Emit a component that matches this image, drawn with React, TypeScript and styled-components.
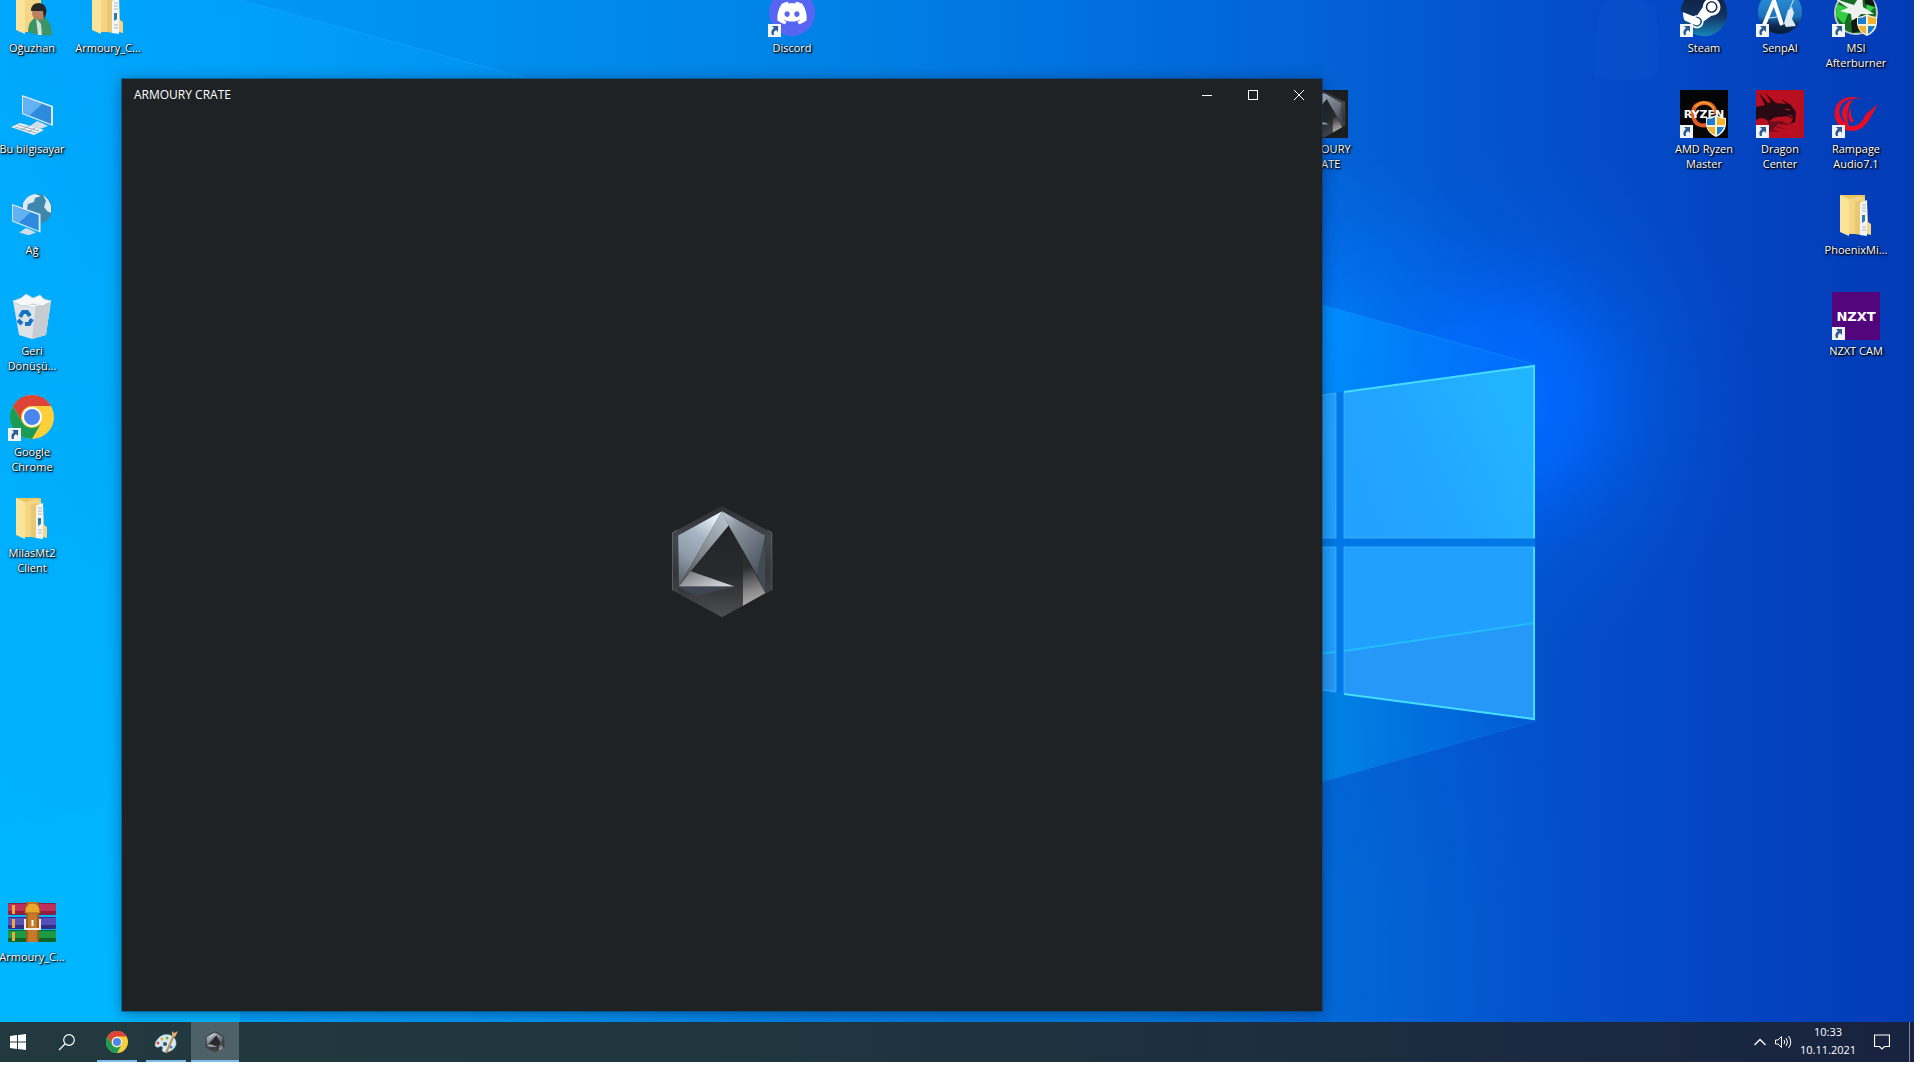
import React from "react";
import styled, { createGlobalStyle } from "styled-components";
import { FaDiscord, FaSteam } from "react-icons/fa";

const GlobalStyle = createGlobalStyle`
  * { box-sizing: border-box; }
  body { margin: 0; background: #fff; }
  button { border: 0; padding: 0; background: none; color: inherit; font: inherit; cursor: default; }
`;

const Screen = styled.main`
  min-height: 100vh;
  padding: 0 6px 18px 0;
  display: flex;
  flex-direction: column;
  overflow: hidden;
  font-family: "Open Sans", "Noto Sans", sans-serif;
  font-size: 11px;
  line-height: 15px;
  color: #fff;
`;

const Desktop = styled.section`
  flex: 1;
  position: relative;
  overflow: hidden;
  background: #0078e0;
`;

const WallpaperSvg = styled.svg`
  position: absolute;
  inset: 0;
  width: 100%;
  height: 100%;
`;

const IconGrid = styled.ul`
  position: relative;
  list-style: none;
  margin: -11px 0 0 -6px;
  padding: 0;
  display: grid;
  grid-template-columns: repeat(25, 76px);
  grid-auto-rows: 101px;
`;

const IconCell = styled.li<{ $col: number; $row: number }>`
  grid-column: ${(p) => p.$col};
  grid-row: ${(p) => p.$row};
  display: flex;
  justify-content: center;
`;

const IconButton = styled.button`
  display: flex;
  flex-direction: column;
  align-items: center;
  gap: 3px;
`;

const IconImage = styled.span`
  position: relative;
  display: block;
  width: 48px;
  height: 48px;
  & > svg { display: block; }
`;

const ShortcutBadge = styled.svg`
  position: absolute;
  left: 0;
  bottom: 0;
`;

const IconLabel = styled.span`
  white-space: pre;
  text-align: center;
  font-weight: 500;
  text-shadow: 1px 1px 1px #000, 1px 1px 3px rgba(0, 0, 0, 0.9), 0 0 2px rgba(0, 0, 0, 0.6);
`;

const TileText = styled.text<{ $size: number }>`
  font-family: "DejaVu Sans", sans-serif;
  font-size: ${(p) => p.$size}px;
  font-weight: 700;
  fill: #fff;
  text-anchor: middle;
`;

const AppWindow = styled.article`
  position: absolute;
  left: 122px;
  top: 79px;
  bottom: 11px;
  width: 1200px;
  display: flex;
  flex-direction: column;
  background: #1e2225;
  box-shadow: 0 0 0 1px rgba(20, 60, 90, 0.5), 0 2px 14px rgba(0, 20, 50, 0.45);
`;

const TitleBar = styled.header`
  height: 32px;
  display: flex;
  align-items: center;
  padding-left: 12px;
`;

const WindowTitle = styled.h1`
  flex: 1;
  margin: 0;
  padding-bottom: 2px;
  font-size: 12px;
  font-weight: 400;
`;

const CaptionButton = styled.button`
  width: 46px;
  height: 32px;
  display: grid;
  place-items: center;
`;

const WindowBody = styled.div`
  flex: 1;
  display: grid;
  place-items: center;
`;

const TaskBar = styled.footer`
  height: 40px;
  display: flex;
  align-items: stretch;
  background: linear-gradient(90deg, #22393f 0%, #20363f 40%, #1c2c40 75%, #18233f 100%);
`;

const StartButton = styled.button`
  width: 42px;
  padding-right: 6px;
  display: grid;
  place-items: center;
`;

const TaskButton = styled.button<{ $active?: boolean }>`
  width: 48px;
  display: grid;
  place-items: center;
  background: ${(p) => (p.$active ? "#4d6167" : "transparent")};
`;

const RunningApps = styled.nav`
  flex: 1;
  display: flex;
  gap: 1px;
  padding-left: 3px;
`;

const RunningButton = styled(TaskButton)`
  position: relative;
  &::after {
    content: "";
    position: absolute;
    bottom: 0;
    left: ${(p) => (p.$active ? 0 : 4)}px;
    right: ${(p) => (p.$active ? 0 : 4)}px;
    height: 2px;
    background: #7cbcec;
  }
`;

const TrayButton = styled.button<{ $width: number }>`
  width: ${(p) => p.$width}px;
  display: grid;
  place-items: center;
`;

const Clock = styled.time`
  width: 64px;
  padding-top: 1px;
  line-height: 18px;
  text-align: center;
  white-space: pre;
`;

const ShowDesktop = styled.button`
  width: 5px;
  margin-left: 6px;
  border-left: 1px solid #7d8798;
`;

function Wallpaper() {
  return (
    <WallpaperSvg viewBox="0 0 1914 1022" preserveAspectRatio="none" aria-hidden="true">
      <defs>
        <linearGradient id="sky" x1="0" x2="1" y1="0" y2="0">
          <stop offset="0" stopColor="#00a8fc" />
          <stop offset=".15" stopColor="#009ef8" />
          <stop offset=".42" stopColor="#0084e8" />
          <stop offset=".58" stopColor="#006fdd" />
          <stop offset=".7" stopColor="#0361d4" />
          <stop offset=".82" stopColor="#044ec9" />
          <stop offset=".92" stopColor="#0443c0" />
          <stop offset="1" stopColor="#033bb6" />
        </linearGradient>
        <radialGradient id="glow" gradientUnits="userSpaceOnUse" cx="1500" cy="400" r="260">
          <stop offset="0" stopColor="#006cff" />
          <stop offset=".3" stopColor="#0068ff" stopOpacity=".85" />
          <stop offset=".6" stopColor="#005ee8" stopOpacity=".4" />
          <stop offset="1" stopColor="#0054d8" stopOpacity="0" />
        </radialGradient>
        <radialGradient id="glowLeft" gradientUnits="userSpaceOnUse" cx="1330" cy="330" r="180">
          <stop offset="0" stopColor="#0080ff" stopOpacity=".8" />
          <stop offset="1" stopColor="#0070f0" stopOpacity="0" />
        </radialGradient>
        <radialGradient id="floor" gradientUnits="userSpaceOnUse" cx="1100" cy="960" r="480">
          <stop offset="0" stopColor="#0088e0" stopOpacity=".6" />
          <stop offset="1" stopColor="#0068d4" stopOpacity="0" />
        </radialGradient>
        <linearGradient id="lowerLeft" x1="0" x2="0" y1="0" y2="1">
          <stop offset="0" stopColor="#00b6ff" stopOpacity="0" />
          <stop offset="1" stopColor="#00b6ff" />
        </linearGradient>
        <linearGradient id="upperBeam" gradientUnits="userSpaceOnUse" x1="1320" x2="1536" y1="0" y2="0">
          <stop offset="0" stopColor="#0094ff" stopOpacity=".8" />
          <stop offset="1" stopColor="#0078fa" stopOpacity=".3" />
        </linearGradient>
        <linearGradient id="lowerBeam" gradientUnits="userSpaceOnUse" x1="1320" x2="1536" y1="0" y2="0">
          <stop offset="0" stopColor="#0088e8" stopOpacity=".9" />
          <stop offset="1" stopColor="#0068dc" stopOpacity=".4" />
        </linearGradient>
        <linearGradient id="pane" gradientUnits="userSpaceOnUse" x1="1344" x2="1537" y1="540" y2="450">
          <stop offset="0" stopColor="#22a0ff" />
          <stop offset=".5" stopColor="#22a6ff" />
          <stop offset="1" stopColor="#22b4ff" />
        </linearGradient>
      </defs>
      <rect width="1914" height="1022" fill="url(#sky)" />
      <rect width="240" height="1022" fill="url(#lowerLeft)" />
      <path d="M240 0 540 82H900V0Z" fill="#007fe0" opacity=".25" />
      <path d="M240 0 540 82" stroke="#25aaff" opacity=".5" />
      <path d="M0 826 122 806V1022H0Z" fill="#00c0ff" opacity=".15" />
      <rect width="1914" height="1022" fill="url(#floor)" />
      <rect width="1914" height="1022" fill="url(#glow)" />
      <rect width="1914" height="1022" fill="url(#glowLeft)" />
      <path d="M1600 8q28-20 56 0l4 36-4 32q-26 8-62 0l0-32z" fill="#0c56cc" opacity=".4" />
      <path d="M1300 299 1536 365V540H1300Z" fill="url(#upperBeam)" />
      <path d="M1300 540H1536V721L1300 788Z" fill="url(#lowerBeam)" />
      <path d="M1300 299 1536 365" stroke="#189bff" opacity=".5" />
      <path d="M1300 788 1536 721" stroke="#1593f4" opacity=".3" />
      <path d="M1336 393 1344 392V694L1336 692Z M1300 538H1535V547H1300Z" fill="#0079e6" />
      <g fill="url(#pane)">
        <path d="M1300 398 1336 393V538H1300Z" />
        <path d="M1300 547H1336V692L1300 687Z" />
        <path d="M1344 392 1535 366V538H1344Z" />
        <path d="M1344 547H1535V720L1344 694Z" fill="#22a0ff" />
      </g>
      <path d="M1344 651 1535 623V719L1344 693Z M1300 656 1335 652V690L1300 686Z" fill="#2a94f4" opacity=".6" />
      <path d="M1344 651 1535 623 M1300 656 1336 652" stroke="#22bcff" strokeWidth="2" />
      <path d="M1344 392 1534 366V538 M1344 694 1534 719V547" stroke="#45dcff" strokeWidth="2" fill="none" />
      <path d="M1344 392V538H1535 M1344 694V547H1535 M1300 398 1336 393V538H1300 M1300 547H1336V692L1300 687" stroke="#48bcff" opacity=".7" fill="none" />
    </WallpaperSvg>
  );
}

function ArmouryLogo({ id, width, height }: { id: string; width: number; height: number }) {
  const g = (n: string) => `url(#${id}-${n})`;
  return (
    <svg width={width} height={height} viewBox="90 70 312 346" aria-hidden="true">
      <defs>
        <linearGradient id={`${id}-ring`} x1="0" x2="0" y1="0" y2="1">
          <stop offset="0" stopColor="#2c2f33" />
          <stop offset=".3" stopColor="#44474b" />
          <stop offset=".6" stopColor="#35373a" />
          <stop offset="1" stopColor="#4b4d4f" />
        </linearGradient>
        <linearGradient id={`${id}-a`} x1=".6" x2=".2" y1="0" y2="1">
          <stop offset="0" stopColor="#e4f0fa" />
          <stop offset=".3" stopColor="#a9b6c3" />
          <stop offset=".65" stopColor="#8d9aa8" />
          <stop offset="1" stopColor="#5d656e" />
        </linearGradient>
        <linearGradient id={`${id}-b`} x1=".8" x2=".1" y1="0" y2="1">
          <stop offset="0" stopColor="#b4c0ca" />
          <stop offset=".5" stopColor="#858b91" />
          <stop offset="1" stopColor="#4c4f52" />
        </linearGradient>
        <linearGradient id={`${id}-c`} x1="0" x2=".8" y1="0" y2="1">
          <stop offset="0" stopColor="#c6d3df" />
          <stop offset=".3" stopColor="#8b95a0" />
          <stop offset="1" stopColor="#4c545e" />
        </linearGradient>
        <linearGradient id={`${id}-d`} x1="0" x2="1" y1="0" y2=".6">
          <stop offset="0" stopColor="#6a6d72" />
          <stop offset="1" stopColor="#d2d5da" />
        </linearGradient>
        <linearGradient id={`${id}-e`} x1=".2" x2=".3" y1="0" y2="1">
          <stop offset=".3" stopColor="#2b2d2f" />
          <stop offset=".72" stopColor="#868485" />
          <stop offset="1" stopColor="#b2aeac" />
        </linearGradient>
        <linearGradient id={`${id}-f`} x1="0" x2="0" y1="0" y2="1">
          <stop offset="0" stopColor="#202326" />
          <stop offset=".6" stopColor="#282a2d" />
          <stop offset="1" stopColor="#4d4e50" />
        </linearGradient>
      </defs>
      <path d="M246 76 396 156 394 330 246 410 98 330 97 156Z" fill={g("ring")} />
      <path d="M97 330V156L112 148 M396 330V156L384 149" stroke="#73787d" strokeWidth="2" fill="none" />
      <path d="M246 92 376 165V338L246 410 114 336V165Z" fill={g("f")} />
      <path d="M246 92 114 165 116 318Z" fill={g("a")} />
      <path d="M246 92 266 135 152 272 116 318Z" fill={g("b")} />
      <path d="M246 92 376 165 352 285 266 135Z" fill={g("c")} />
      <path d="M376 165V338L350 283Z" fill="#424a54" />
      <path d="M152 272 284 318H116Z" fill={g("d")} />
      <path d="M116 319H284L168 346Z" fill="#3e4655" />
      <path d="M309 210 376 338 309 376Z" fill={g("e")} />
    </svg>
  );
}

function ChromeLogo({ size }: { size: number }) {
  return (
    <svg width={size} height={size} viewBox="0 0 48 48" aria-hidden="true">
      <circle cx="24" cy="24" r="22" fill="#fdd03b" />
      <path d="M4.9 13A22 22 0 0 1 43.1 13H24A11 11 0 0 0 14.5 29.500Z" fill="#db4437" />
      <path d="M4.900 13A22 22 0 0 0 24 46L33.500 29.500A11 11 0 0 1 14.500 29.500Z" fill="#1a9b57" />
      <circle cx="24" cy="24" r="10" fill="#fff" />
      <circle cx="24" cy="24" r="8" fill="#4a86ee" />
    </svg>
  );
}

function FolderArt({ person }: { person?: boolean }) {
  return (
    <svg width="48" height="48" viewBox="0 0 48 48" aria-hidden="true">
      <path d="M8 4 33 4V40H12Z" fill="#eac65e" />
      <path d="M8 4 17 8V45L8 41Z" fill="#fbe39a" />
      <path d="M17 8 29 5 33 8V43H17Z" fill="#f3d584" />
      {!person && (
        <>
          <path d="M23 11 29 9V44L23 43Z" fill="#e9c873" />
          <path d="M28 12 35 9V45L28 44Z" fill="#f4f5f6" />
          <path d="M30 14h4M30 17h4M30 20h4M30 36h4M30 39h4" stroke="#aab4bd" />
          <path d="M30 24h3v6l-3 2z" fill="#2f7ba8" />
          <path d="M35 9 36 31 39 33V44L35 43Z" fill="#f3d687" />
        </>
      )}
      {person && (
        <>
          <path d="M20 43Q20 32 28 28L36 28Q44 33 44 46Q34 48 20 43Z" fill="#3c9464" />
          <path d="M28 29 33 35 34 46H30Z" fill="#d5dfe0" />
          <circle cx="31" cy="24" r="7" fill="#b9825e" />
          <path d="M23 22Q23 14 31 14Q40 15 38 25L36 30 35 22Q29 22 23 22Z" fill="#272525" />
        </>
      )}
    </svg>
  );
}

function Monitor() {
  return (
    <>
      <path d="M0 0 31 11V31L0 19Z" fill="#dcebf5" />
      <path d="M1 2 29 12V29L1 18Z" fill="#2d8bdd" />
      <path d="M1 2 20 9 8 20 1 18Z" fill="#62b2f4" />
      <path d="M15 26 20 28 26 31 18 34 8 31Z" fill="#d5dde4" />
    </>
  );
}

function PcArt() {
  return (
    <svg width="48" height="48" viewBox="0 0 48 48" aria-hidden="true">
      <g transform="translate(14 5)"><Monitor /></g>
      <path d="M3 37 12 33 36 40 26 45Z" fill="#f0f3f5" />
      <path d="M7 37 28 43M10 35 31 41M13 40 21 36M20 42 27 38" stroke="#9caab5" />
    </svg>
  );
}

function NetworkArt() {
  return (
    <svg width="48" height="48" viewBox="0 0 48 48" aria-hidden="true">
      <circle cx="29" cy="18" r="15" fill="#3f86ad" />
      <path d="M15 12Q19 4 27 3L33 5 27 7 26 11 20 13 19 18 15 19Z M35 4Q41 8 43 15L43 22 39 20 36 16 38 10Z" fill="#dcebf2" />
      <g transform="translate(4 13) scale(.92)"><Monitor /></g>
    </svg>
  );
}

function RecycleBinArt() {
  return (
    <svg width="48" height="48" viewBox="0 0 48 48" aria-hidden="true">
      <path d="M5 9 43 9 38 43 24 47 11 43Z" fill="#dde3e7" />
      <path d="M28 12 43 9 38 43 24 47Z" fill="#c5cdd3" />
      <path d="M5 9 13 6 18 2 25 6 32 3 36 7 43 9 35 14 25 12 13 14Z" fill="#f5f7f8" stroke="#b9c4cb" strokeWidth=".7" />
      <path d="M5 9 26 14 43 9" fill="none" stroke="#fff" />
      <g fill="none" stroke="#1674c8" strokeWidth="4" transform="translate(-2 0)">
        <path d="M14 25 17 20H21L24 24" />
        <path d="M26 27 23 32H19" />
        <path d="M16 32 12 28" />
      </g>
    </svg>
  );
}

function WinRarArt() {
  const books = [
    { y: 5, fill: "#8c1f3f", mid: "#c03058" },
    { y: 19, fill: "#332d86", mid: "#5450b8" },
    { y: 32, fill: "#0f6429", mid: "#1f9a42" },
  ];
  return (
    <svg width="48" height="48" viewBox="0 0 48 48" aria-hidden="true">
      {books.map((b) => (
        <g key={b.y}>
          <rect x="0" y={b.y} width="48" height="12" rx="1" fill={b.fill} />
          <rect x="0" y={b.y + 1} width="48" height="7" fill={b.mid} />
          <rect x="4" y={b.y + 2} width="3" height="9" fill="#e8ad42" />
        </g>
      ))}
      <rect x="18" y="4" width="13" height="40" fill="#a55c18" />
      <rect x="20" y="4" width="9" height="40" fill="#c57a2a" />
      <path d="M17 15Q17 5 24.500 5Q32 5 32 15Z" fill="#eaa82c" stroke="#a8661b" />
      <path d="M17 21V31H32V21" fill="none" stroke="#eeece8" strokeWidth="2" />
      <path d="M24.500 22V28" stroke="#fff" strokeWidth="2" />
    </svg>
  );
}

function DiscordArt() {
  return (
    <svg width="48" height="48" viewBox="0 0 48 48" aria-hidden="true">
      <circle cx="24" cy="24" r="23" fill="#5865f2" />
      <FaDiscord x="8" y="8" size={32} color="#fff" />
    </svg>
  );
}

function SteamArt() {
  return (
    <svg width="48" height="48" viewBox="0 0 48 48" aria-hidden="true">
      <defs>
        <linearGradient id="steam" x1="0" x2="0" y1="0" y2="1">
          <stop offset="0" stopColor="#101b37" />
          <stop offset=".55" stopColor="#12315f" />
          <stop offset="1" stopColor="#1685b8" />
        </linearGradient>
      </defs>
      <circle cx="24" cy="24" r="21" fill="#fff" />
      <FaSteam size={48} fill="url(#steam)" />
    </svg>
  );
}

function SenpAiArt() {
  return (
    <svg width="48" height="48" viewBox="0 0 48 48" aria-hidden="true">
      <defs>
        <linearGradient id="senpai" x1="0" x2="0" y1="0" y2="1">
          <stop offset="0" stopColor="#3294e0" />
          <stop offset=".6" stopColor="#1b74ba" />
          <stop offset=".8" stopColor="#0b2c52" />
          <stop offset="1" stopColor="#091933" />
        </linearGradient>
      </defs>
      <circle cx="24" cy="23" r="22" fill="url(#senpai)" />
      <path d="M8 36 18 12 26 36" stroke="#fff" strokeWidth="4" fill="none" />
      <path d="M28 34 32 21 36 18 38 24 36 30 40 37 30 38Z" fill="#dceaf5" />
      <path d="M34 19 38 10M13 29 21 28M35 25 32 37" stroke="#dceaf5" strokeWidth="1" />
    </svg>
  );
}

function Shield() {
  return (
    <g transform="translate(26 25)">
      <path d="M10 0Q15 3 20 3V10Q19 18 10 22Q1 18 0 10V3Q5 3 10 0Z" fill="#f4f1df" />
      <path d="M9 2V10H1V4Q6 4 9 2Z M11 12H18Q16 17 11 20Z" fill="#1c7dd0" />
      <path d="M11 2Q15 4 19 4V10H11Z M1 12H9V20Q3 17 1 12Z" fill="#f5b32d" />
    </g>
  );
}

function AfterburnerArt() {
  return (
    <svg width="48" height="48" viewBox="0 0 48 48" aria-hidden="true">
      <circle cx="24" cy="24" r="21" fill="#176c25" stroke="#bfc6c8" strokeWidth="2" />
      <path d="M5 15 18 20 12 35 4 27Z M35 6 43 18 34 27Z M18 32 27 31 24 43Z" fill="#35cf43" />
      <path d="M3 10 22 16 30 3 31 18 42 25 29 25 20 34 19 25 8 22 16 19Z" fill="#edf2ee" />
      <path d="M32 4Q42 8 43 18L33 15Z M19 32 30 26 28 42 20 44Z" fill="#101a12" />
      <g transform="translate(-1 0)"><Shield /></g>
    </svg>
  );
}

function RyzenArt() {
  return (
    <svg width="48" height="48" viewBox="0 0 48 48" aria-hidden="true">
      <rect width="48" height="48" fill="#050505" />
      <path d="M30 34Q16 39 13 26Q12 14 23 13Q34 12 36 24" fill="none" stroke="#e05e25" strokeWidth="4" />
      <path d="M15 17Q25 7 34 19" fill="none" stroke="#f29b2e" strokeWidth="2" />
      <TileText x="24" y="28" $size={11}>RYZEN</TileText>
      <Shield />
    </svg>
  );
}

function DragonArt() {
  return (
    <svg width="48" height="48" viewBox="0 0 48 48" aria-hidden="true">
      <rect width="48" height="48" fill="#b90f20" />
      <path d="M0 17 9 15 3 3 12 13 15 12 9 3 20 13 30 14 25 9 35 15 40 22 39 32 34 34 37 29 31 26 25 27Q18 26 13 32Q7 25 0 30Z" fill="#280a14" />
      <path d="M12 32 25 31 35 35 22 34 12 44ZM13 38 26 43 16 41ZM15 34 32 40 20 37Z" fill="#6b0d1c" />
      <path d="M29 19 34 20M33 25 37 27" stroke="#c31b2d" strokeWidth="1" />
    </svg>
  );
}

function RampageArt() {
  return (
    <svg width="48" height="48" viewBox="0 0 48 48" aria-hidden="true">
      <g fill="#e80c24">
        <path d="M30 9Q12 3 4 16Q-1 30 11 39Q27 46 37 30L46 14 34 24Q28 38 18 36Q3 28 9 15Q15 7 30 9Z" />
        <path d="M22 9Q11 12 10 24Q11 32 17 36Q12 20 22 9Z" />
        <path d="M19 17Q14 26 19 33L22 31Q18 26 19 17Z" />
      </g>
    </svg>
  );
}

function NzxtArt() {
  return (
    <svg width="48" height="48" viewBox="0 0 48 48" aria-hidden="true">
      <rect width="48" height="48" fill="#53067b" />
      <TileText x="24" y="29" $size={13}>NZXT</TileText>
    </svg>
  );
}

function ArmouryTile() {
  return (
    <svg width="48" height="48" viewBox="0 0 48 48" aria-hidden="true">
      <rect width="48" height="48" fill="#1b1d20" />
      <ArmouryLogo id="tile" width={48} height={48} />
    </svg>
  );
}

const desktopIcons: { col: number; row: number; label: string; art: React.ReactNode; shortcut?: boolean }[] = [
  { col: 1, row: 1, label: "Oğuzhan", art: <FolderArt person /> },
  { col: 2, row: 1, label: "Armoury_C...", art: <FolderArt /> },
  { col: 1, row: 2, label: "Bu bilgisayar", art: <PcArt /> },
  { col: 1, row: 3, label: "Ağ", art: <NetworkArt /> },
  { col: 1, row: 4, label: "Geri\nDönüşü...", art: <RecycleBinArt /> },
  { col: 1, row: 5, label: "Google\nChrome", art: <ChromeLogo size={48} />, shortcut: true },
  { col: 1, row: 6, label: "MilasMt2\nClient", art: <FolderArt /> },
  { col: 1, row: 10, label: "Armoury_C...", art: <WinRarArt /> },
  { col: 11, row: 1, label: "Discord", art: <DiscordArt />, shortcut: true },
  { col: 18, row: 2, label: "ARMOURY\nCRATE", art: <ArmouryTile /> },
  { col: 23, row: 1, label: "Steam", art: <SteamArt />, shortcut: true },
  { col: 24, row: 1, label: "SenpAI", art: <SenpAiArt />, shortcut: true },
  { col: 25, row: 1, label: "MSI\nAfterburner", art: <AfterburnerArt />, shortcut: true },
  { col: 23, row: 2, label: "AMD Ryzen\nMaster", art: <RyzenArt />, shortcut: true },
  { col: 24, row: 2, label: "Dragon\nCenter", art: <DragonArt />, shortcut: true },
  { col: 25, row: 2, label: "Rampage\nAudio7.1", art: <RampageArt />, shortcut: true },
  { col: 25, row: 3, label: "PhoenixMi...", art: <FolderArt /> },
  { col: 25, row: 4, label: "NZXT CAM", art: <NzxtArt />, shortcut: true },
];

export default function App() {
  return (
    <Screen>
      <GlobalStyle />
      <Desktop>
        <Wallpaper />
        <IconGrid>
          {desktopIcons.map((item) => (
            <IconCell key={`${item.col}-${item.row}`} $col={item.col} $row={item.row}>
              <IconButton type="button">
                <IconImage>
                  {item.art}
                  {item.shortcut && (
                    <ShortcutBadge width="13" height="13" viewBox="0 0 13 13" aria-hidden="true">
                      <rect width="13" height="13" fill="#f1f4f7" />
                      <path d="M4 2H10V8L8 6Q5 8 6 11H4Q2 7 6 4Z" fill="#2b5b92" />
                    </ShortcutBadge>
                  )}
                </IconImage>
                <IconLabel>{item.label}</IconLabel>
              </IconButton>
            </IconCell>
          ))}
        </IconGrid>
        <AppWindow>
          <TitleBar>
            <WindowTitle>ARMOURY CRATE</WindowTitle>
            <CaptionButton type="button" aria-label="Minimize">
              <svg width="10" height="10" viewBox="0 0 10 10"><path d="M0 5.500H10" stroke="#fff" /></svg>
            </CaptionButton>
            <CaptionButton type="button" aria-label="Maximize">
              <svg width="10" height="10" viewBox="0 0 10 10"><rect x=".5" y=".5" width="9" height="9" fill="none" stroke="#fff" /></svg>
            </CaptionButton>
            <CaptionButton type="button" aria-label="Close">
              <svg width="10" height="10" viewBox="0 0 10 10"><path d="M0 0 10 10M10 0 0 10" stroke="#fff" /></svg>
            </CaptionButton>
          </TitleBar>
          <WindowBody>
            <ArmouryLogo id="splash" width={104} height={115} />
          </WindowBody>
        </AppWindow>
      </Desktop>
      <TaskBar>
        <StartButton type="button" aria-label="Start">
          <svg width="16" height="16" viewBox="0 0 16 16">
            <path d="M0 2 7 1V7.500H0ZM8 1 16 0V7.500H8ZM0 8.500H7V15L0 14ZM8 8.500H16V16L8 15Z" fill="#fff" />
          </svg>
        </StartButton>
        <TaskButton type="button" aria-label="Search">
          <svg width="17" height="17" viewBox="0 0 17 17" fill="none" stroke="#fff">
            <circle cx="11" cy="6" r="5.300" strokeWidth="1.200" />
            <path d="M7 10 1 16" strokeWidth="1.300" />
          </svg>
        </TaskButton>
        <RunningApps>
          <RunningButton type="button" aria-label="Google Chrome"><ChromeLogo size={24} /></RunningButton>
          <RunningButton type="button" aria-label="Paint">
            <svg width="24" height="24" viewBox="0 0 24 24">
              <path d="M3 10Q8 3 16 5Q23 8 22 15Q19 22 12 22Q9 23 8 20Q10 17 7 16Q2 19 1 15Q1 12 3 10Z" fill="#d4e9f3" stroke="#9cc1d0" strokeWidth=".5" />
              <circle cx="4" cy="13" r="1.500" fill="#df4c3f" />
              <circle cx="8" cy="9" r="1.500" fill="#e9ad3a" />
              <circle cx="13" cy="8" r="1.500" fill="#67b255" />
              <circle cx="11" cy="14" r="2" fill="#355762" />
              <circle cx="17" cy="17" r="1.500" fill="#3584cb" />
              <path d="M12 23 20 5" stroke="#c58b4d" strokeWidth="2" />
              <path d="M18 1 20 3 24 1 21 7 18 6Z" fill="#dfad6c" />
            </svg>
          </RunningButton>
          <RunningButton type="button" aria-label="Armoury Crate" $active><ArmouryLogo id="task" width={22} height={22} /></RunningButton>
        </RunningApps>
        <TrayButton type="button" aria-label="Show hidden icons" $width={22}>
          <svg width="12" height="8" viewBox="0 0 12 8"><path d="M.5 7 6 1.500 11.500 7" fill="none" stroke="#fff" strokeWidth="1.300" /></svg>
        </TrayButton>
        <TrayButton type="button" aria-label="Volume" $width={25}>
          <svg width="17" height="14" viewBox="0 0 17 14" fill="none" stroke="#fff">
            <path d="M.5 5H3L6.500 1.500V12.500L3 9H.5ZM9 5Q10.500 7 9 9M11 3Q14 7 11 11M13.500 1Q18 7 13.500 13" />
          </svg>
        </TrayButton>
        <Clock dateTime="2021-11-10T10:33">{"10:33\n10.11.2021"}</Clock>
        <TrayButton type="button" aria-label="Notifications" $width={43}>
          <svg width="16" height="16" viewBox="0 0 16 16">
            <path d="M.5 1H15.500V12.500H10.500L8 15 5.500 12.500H.5Z" fill="none" stroke="#fff" strokeWidth="1.200" />
          </svg>
        </TrayButton>
        <ShowDesktop type="button" aria-label="Show desktop" />
      </TaskBar>
    </Screen>
  );
}
